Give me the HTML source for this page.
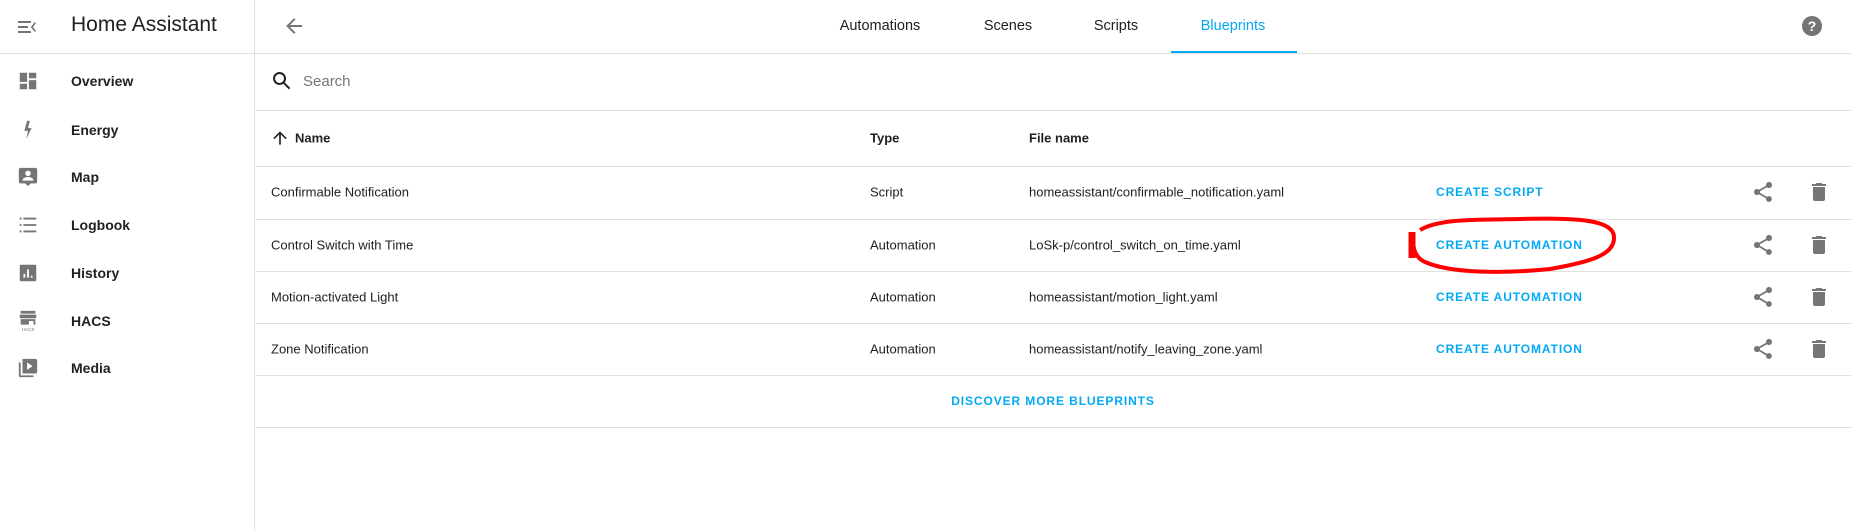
<!DOCTYPE html>
<html><head><meta charset="utf-8"><style>
*{box-sizing:border-box;margin:0;padding:0}
body{width:1851px;height:531px;overflow:hidden;background:#fff;font-family:"Liberation Sans",Roboto,sans-serif;color:#212121;position:relative}
.abs{position:absolute}
.side{left:0;top:0;width:255px;height:531px;border-right:1px solid #e0e0e0}
.hline{height:1px;background:#e0e0e0}
.nav{position:absolute;left:71px;font-size:14px;font-weight:bold;transform:translateY(-50%)}
.ico{position:absolute;left:17px;width:22px;height:22px;transform:translateY(-50%)}
.tab{position:absolute;top:26px;transform:translate(-50%,-50%);font-size:14.5px;color:#212121}
.cell{position:absolute;font-size:13px;transform:translateY(-50%)}
.btn{position:absolute;left:1436px;font-size:12px;font-weight:bold;color:#03a9f4;letter-spacing:0.9px;transform:translateY(-50%)}
</style></head><body>
<div class="abs side"></div>
<svg class="abs" style="left:15px;top:15px" width="24" height="24" viewBox="0 0 24 24"><path fill="#757575" d="M3 6h13v2H3zm0 5h10v2H3zm0 5h13v2H3zm18-8l-3 4 3 4-1.2 1-4-5 4-5z"/></svg>
<div class="abs" style="left:71px;top:13px;font-size:21px;color:#212121">Home Assistant</div>
<div class="abs hline" style="left:0;top:53px;width:1851px"></div>
<svg class="abs" style="left:282px;top:14px" width="24" height="24" viewBox="0 0 24 24"><path fill="#757575" d="M20 11v2H8l5.5 5.5-1.4 1.4L4.2 12l7.9-7.9 1.4 1.4L8 11z"/></svg>
<div class="tab" style="left:880px">Automations</div>
<div class="tab" style="left:1008px">Scenes</div>
<div class="tab" style="left:1116px">Scripts</div>
<div class="tab" style="left:1233px;color:#03a9f4">Blueprints</div>
<div class="abs" style="left:1171px;top:51px;width:126px;height:2px;background:#03a9f4"></div>
<svg class="abs" style="left:1800px;top:14px" width="24" height="24" viewBox="0 0 24 24"><circle cx="12" cy="12" r="10" fill="#757575"/><text x="12" y="17" text-anchor="middle" font-size="14" font-weight="bold" fill="#fff" font-family="Liberation Sans">?</text></svg>

<svg class="ico" style="top:81px" viewBox="0 0 24 24"><path fill="#757575" d="M3 3h8v10H3zm0 12h8v6H3zm10-12h8v6h-8zm0 8h8v10h-8z"/></svg>
<div class="nav" style="top:81px">Overview</div>
<svg class="ico" style="top:130px" viewBox="0 0 24 24"><path fill="#757575" d="M11 2l-3 11h4l-2 9 6-12h-4l2-8z"/></svg>
<div class="nav" style="top:130px">Energy</div>
<svg class="ico" style="top:177px" viewBox="0 0 24 24"><path fill="#757575" d="M4 2h16a2 2 0 012 2v13a2 2 0 01-2 2h-5l-3 3-3-3H4a2 2 0 01-2-2V4a2 2 0 012-2zm8 3a3 3 0 100 6 3 3 0 000-6zm-6 11h12c0-3-4-4-6-4s-6 1-6 4z"/></svg>
<div class="nav" style="top:177px">Map</div>
<svg class="ico" style="top:225px" viewBox="0 0 24 24"><path fill="#757575" d="M3 4h2v2H3zm4 0h14v2H7zm-4 7h2v2H3zm4 0h14v2H7zm-4 7h2v2H3zm4 0h14v2H7z"/></svg>
<div class="nav" style="top:225px">Logbook</div>
<svg class="ico" style="top:273px" viewBox="0 0 24 24"><path fill="#757575" d="M4 3h16a1 1 0 011 1v16a1 1 0 01-1 1H4a1 1 0 01-1-1V4a1 1 0 011-1zm3 10v4h2v-4zm4-5v9h2V8zm4 7v2h2v-2z"/></svg>
<div class="nav" style="top:273px">History</div>
<svg class="ico" style="top:321px" viewBox="0 0 24 24"><path fill="#757575" d="M4 1h16v3H4zm-1 4h18v4H3zm1 5h16v6h-2v-4h-5v4H4z"/><text x="12" y="23" text-anchor="middle" font-size="5" fill="#757575" font-family="Liberation Sans">HACS</text></svg>
<div class="nav" style="top:321px">HACS</div>
<svg class="ico" style="top:368px" viewBox="0 0 24 24"><path fill="#757575" d="M6 2h14a2 2 0 012 2v12a2 2 0 01-2 2H6V2zm5 4v8l6-4zM2 6h2v14h14v2H4a2 2 0 01-2-2z"/></svg>
<div class="nav" style="top:368px">Media</div>

<svg class="abs" style="left:270px;top:69px" width="24" height="24" viewBox="0 0 24 24"><path fill="#212121" d="M9.5 3a6.5 6.5 0 015.2 10.4l5.6 5.6-1.4 1.4-5.6-5.6A6.5 6.5 0 119.5 3zm0 2a4.5 4.5 0 100 9 4.5 4.5 0 000-9z"/></svg>
<div class="abs" style="left:303px;top:73px;font-size:15px;color:#757575">Search</div>
<div class="abs hline" style="left:256px;top:110px;width:1595px"></div>
<svg class="abs" style="left:270px;top:128px" width="20" height="20" viewBox="0 0 24 24"><path fill="#212121" d="M11 20V7.8l-5.6 5.6L4 12l8-8 8 8-1.4 1.4L13 7.8V20z"/></svg>
<div class="cell" style="left:295px;top:138px;font-weight:bold">Name</div>
<div class="cell" style="left:870px;top:138px;font-weight:bold">Type</div>
<div class="cell" style="left:1029px;top:138px;font-weight:bold">File name</div>
<div class="abs hline" style="left:256px;top:166px;width:1595px"></div>

<div class="cell" style="left:271px;top:192px">Confirmable Notification</div>
<div class="cell" style="left:870px;top:192px">Script</div>
<div class="cell" style="left:1029px;top:192px">homeassistant/confirmable_notification.yaml</div>
<div class="btn" style="top:192px">CREATE SCRIPT</div>
<div class="abs hline" style="left:256px;top:219px;width:1595px"></div>

<div class="cell" style="left:271px;top:245px">Control Switch with Time</div>
<div class="cell" style="left:870px;top:245px">Automation</div>
<div class="cell" style="left:1029px;top:245px">LoSk-p/control_switch_on_time.yaml</div>
<div class="btn" style="top:245px">CREATE AUTOMATION</div>
<div class="abs hline" style="left:256px;top:271px;width:1595px"></div>

<div class="cell" style="left:271px;top:297px">Motion-activated Light</div>
<div class="cell" style="left:870px;top:297px">Automation</div>
<div class="cell" style="left:1029px;top:297px">homeassistant/motion_light.yaml</div>
<div class="btn" style="top:297px">CREATE AUTOMATION</div>
<div class="abs hline" style="left:256px;top:323px;width:1595px"></div>

<div class="cell" style="left:271px;top:349px">Zone Notification</div>
<div class="cell" style="left:870px;top:349px">Automation</div>
<div class="cell" style="left:1029px;top:349px">homeassistant/notify_leaving_zone.yaml</div>
<div class="btn" style="top:349px">CREATE AUTOMATION</div>
<div class="abs hline" style="left:256px;top:375px;width:1595px"></div>

<div class="abs" style="left:1053px;top:401px;transform:translate(-50%,-50%);font-size:12px;font-weight:bold;color:#03a9f4;letter-spacing:0.9px">DISCOVER MORE BLUEPRINTS</div>
<div class="abs hline" style="left:256px;top:427px;width:1595px"></div>

<svg class="abs" style="left:0;top:0" width="1851" height="531">
<defs>
<g id="sh"><path fill="#757575" d="M18 16.1c-.8 0-1.4.3-2 .8l-7.1-4.2c.1-.2.1-.5.1-.7s0-.5-.1-.7L16 7.2c.5.5 1.2.8 2 .8 1.7 0 3-1.3 3-3s-1.3-3-3-3-3 1.3-3 3c0 .2 0 .5.1.7L8 9.8C7.5 9.3 6.8 9 6 9c-1.7 0-3 1.3-3 3s1.3 3 3 3c.8 0 1.5-.3 2-.8l7.1 4.2c-.1.2-.1.4-.1.6 0 1.6 1.3 2.9 2.9 2.9s2.9-1.3 2.9-2.9-1.2-2.9-2.8-2.9z"/></g>
<g id="tr"><path fill="#757575" d="M6 19a2 2 0 002 2h8a2 2 0 002-2V7H6zM19 4h-3.5l-1-1h-5l-1 1H5v2h14z"/></g>
</defs>
<use href="#sh" x="1751" y="180"/><use href="#tr" x="1807" y="180"/>
<use href="#sh" x="1751" y="233"/><use href="#tr" x="1807" y="233"/>
<use href="#sh" x="1751" y="285"/><use href="#tr" x="1807" y="285"/>
<use href="#sh" x="1751" y="337"/><use href="#tr" x="1807" y="337"/>
<path d="M1420 230 C1440 218 1480 220 1520 219 C1570 218 1615 218 1614 238 C1614 255 1590 262 1550 269 C1500 274 1450 273 1425 262 C1416 258 1413 250 1413 240" fill="none" stroke="#f00" stroke-width="4"/>
<path d="M1412 232 L1412 258" stroke="#f00" stroke-width="7"/>
</svg>
</body></html>
